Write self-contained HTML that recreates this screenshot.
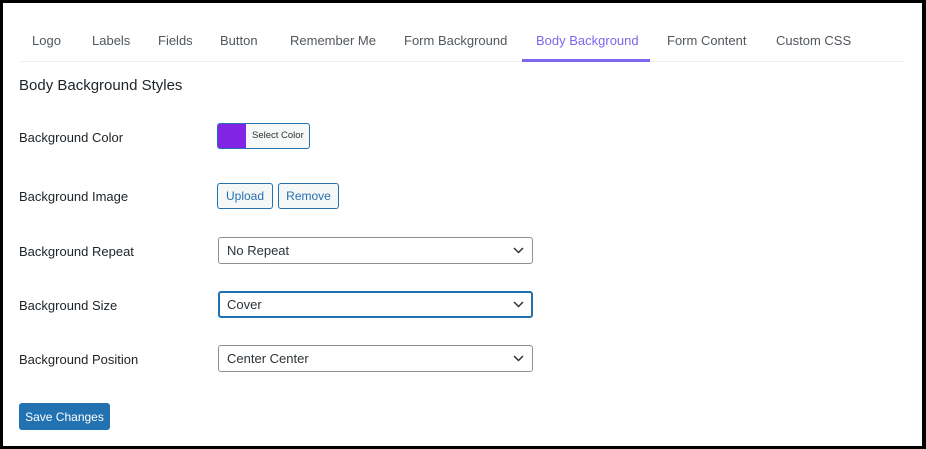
<!DOCTYPE html>
<html><head><style>
*{box-sizing:border-box;margin:0;padding:0}
html,body{width:926px;height:449px;background:#fff}
body{font-family:"Liberation Sans",sans-serif;position:relative;overflow:hidden}
.a{position:absolute;white-space:nowrap}
.tab{position:absolute;top:33px;font-size:13px;color:#50575e}
.lbl{position:absolute;left:19px;font-size:13px;color:#1d2327}
.btn{position:absolute;border:1px solid #2271b1;border-radius:3px;background:#f6f7f7;color:#2271b1;font-size:12px;display:flex;align-items:center;justify-content:center}
.sel{position:absolute;left:218px;width:315px;height:27px;border:1px solid #8c8f94;border-radius:3px;font-size:13px;color:#2c3338;padding-left:8px;display:flex;align-items:center;background:#fff}
.sel svg{position:absolute;right:8px;top:9px}
</style></head><body>
<div class="a" style="left:20px;top:61px;width:884px;height:1px;background:#f0f0f1"></div>
<div class="tab" style="left:32px">Logo</div>
<div class="tab" style="left:92px">Labels</div>
<div class="tab" style="left:158px">Fields</div>
<div class="tab" style="left:220px">Button</div>
<div class="tab" style="left:290px">Remember Me</div>
<div class="tab" style="left:404px">Form Background</div>
<div class="tab" style="left:536px;color:#7b68ee">Body Background</div>
<div class="tab" style="left:667px">Form Content</div>
<div class="tab" style="left:776px">Custom CSS</div>
<div class="a" style="left:522px;top:59px;width:128px;height:3px;background:#7b68ee"></div>
<div class="a" style="left:19px;top:77px;font-size:15px;color:#1d2327">Body Background Styles</div>
<div class="lbl" style="top:130px">Background Color</div>
<div class="lbl" style="top:189px">Background Image</div>
<div class="lbl" style="top:244px">Background Repeat</div>
<div class="lbl" style="top:298px">Background Size</div>
<div class="lbl" style="top:352px">Background Position</div>
<div class="a" style="left:217px;top:123px;width:93px;height:26px;border:1px solid #2271b1;border-radius:3px;background:#f6f7f7;overflow:hidden">
<div style="position:absolute;left:0;top:0;width:28px;height:100%;background:#8224e3"></div>
<div style="position:absolute;left:34px;top:6px;font-size:9.5px;color:#2c3338">Select Color</div></div>
<div class="btn" style="left:217px;top:183px;width:56px;height:26px">Upload</div>
<div class="btn" style="left:278px;top:183px;width:61px;height:26px">Remove</div>
<div class="sel" style="top:237px">No Repeat<svg width="11" height="7"><path d="M1 1l4.5 4.5L10 1" fill="none" stroke="#2c3338" stroke-width="1.5"/></svg></div>
<div class="sel" style="top:291px;border:2px solid #2271b1;padding-left:7px">Cover<svg width="11" height="7" style="right:7px;top:8px"><path d="M1 1l4.5 4.5L10 1" fill="none" stroke="#2c3338" stroke-width="1.5"/></svg></div>
<div class="sel" style="top:345px">Center Center<svg width="11" height="7"><path d="M1 1l4.5 4.5L10 1" fill="none" stroke="#2c3338" stroke-width="1.5"/></svg></div>
<div class="a" style="left:19px;top:403px;width:91px;height:27px;background:#2271b1;border-radius:3px;color:#fff;font-size:12px;display:flex;align-items:center;justify-content:center">Save Changes</div>
<div class="a" style="left:0;top:0;width:926px;height:3px;background:#000"></div>
<div class="a" style="left:0;top:0;width:3px;height:449px;background:#000"></div>
<div class="a" style="right:0;top:0;width:4px;height:449px;background:#000"></div>
<div class="a" style="left:0;bottom:0;width:926px;height:3px;background:#000"></div>
</body></html>
